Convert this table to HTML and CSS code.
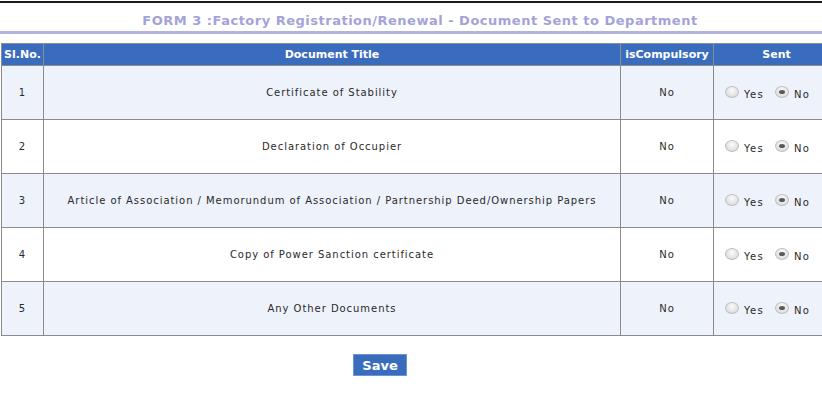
FILE: index.html
```html
<!DOCTYPE html>
<html>
<head>
<meta charset="utf-8">
<link rel="stylesheet" href="styles.css">
</head>
<body>
<div class="topline"></div>
<div class="page">
  <h1 class="title">FORM 3 :Factory Registration/Renewal - Document Sent to Department</h1>
  <table class="docs">
    <thead>
      <tr>
        <th class="c-sl">Sl.No.</th>
        <th class="c-title">Document Title</th>
        <th class="c-comp">isCompulsory</th>
        <th class="c-sent">Sent</th>
      </tr>
    </thead>
    <tbody>
      <tr class="odd">
        <td>1</td><td>Certificate of Stability</td><td>No</td>
        <td class="sent"><span class="radio"></span><span class="lbl">Yes</span><span class="radio on"></span><span class="lbl">No</span></td>
      </tr>
      <tr>
        <td>2</td><td>Declaration of Occupier</td><td>No</td>
        <td class="sent"><span class="radio"></span><span class="lbl">Yes</span><span class="radio on"></span><span class="lbl">No</span></td>
      </tr>
      <tr class="odd">
        <td>3</td><td>Article of Association / Memorundum of Association / Partnership Deed/Ownership Papers</td><td>No</td>
        <td class="sent"><span class="radio"></span><span class="lbl">Yes</span><span class="radio on"></span><span class="lbl">No</span></td>
      </tr>
      <tr>
        <td>4</td><td>Copy of Power Sanction certificate</td><td>No</td>
        <td class="sent"><span class="radio"></span><span class="lbl">Yes</span><span class="radio on"></span><span class="lbl">No</span></td>
      </tr>
      <tr class="odd">
        <td>5</td><td>Any Other Documents</td><td>No</td>
        <td class="sent"><span class="radio"></span><span class="lbl">Yes</span><span class="radio on"></span><span class="lbl">No</span></td>
      </tr>
    </tbody>
  </table>
  <div class="actions"><button class="save">Save</button></div>
</div>
</body>
</html>
```

FILE: styles.css
```css
html, body {
  margin: 0;
  padding: 0;
  background: #fff;
  overflow: hidden;
}
body {
  font-family: "DejaVu Sans", Verdana, sans-serif;
  color: #222;
}
.topline {
  margin-top: 1px;
  height: 2px;
  background: #1a1a1a;
}
.page {
  width: 840px;
}
.title {
  margin: 0;
  padding-top: 10px;
  height: 18px;
  text-align: center;
  font-size: 13px;
  letter-spacing: 0.5px;
  font-weight: bold;
  color: #a3a3da;
  border-bottom: 3px solid #b3b3e0;
}
.docs {
  margin: 9px 0 0 1px;
  width: 839px;
  border-collapse: collapse;
  font-size: 10px;
  letter-spacing: 0.95px;
}
.docs th, .docs td {
  border: 1px solid #8c8c8c;
  text-align: center;
  padding: 0;
}
.docs th {
  background: #3a6cbe;
  color: #fff;
  font-weight: bold;
  font-size: 11px;
  letter-spacing: 0;
  height: 21px;
}
.c-sl { width: 41px; }
.c-title { width: 576px; }
.c-comp { width: 92px; }
.docs td {
  height: 53px;
  color: #2a2a2a;
}
.docs tr.odd td {
  background: #edf2fb;
}
.docs td.sent {
  text-align: left;
  padding-left: 11px;
}
.radio {
  display: inline-block;
  width: 14px;
  height: 12px;
  border-radius: 50%;
  border: 1px solid #c0c0c0;
  background: radial-gradient(circle at 50% 35%, #fbfbfb 0%, #e2e2e2 65%, #cdcdcd 100%);
  vertical-align: -1px;
  box-sizing: border-box;
  position: relative;
}
.radio.on::after {
  content: "";
  position: absolute;
  left: 3px;
  top: 3px;
  width: 6px;
  height: 4px;
  border-radius: 50%;
  background: #5a5a5a;
}
.lbl {
  display: inline-block;
  margin: 0 11px 0 5px;
  letter-spacing: 1.3px;
  position: relative;
  top: 1px;
}
.actions {
  padding-top: 18px;
  padding-left: 353px;
}
.save {
  width: 54px;
  height: 22px;
  background: #3a6cbe;
  color: #fff;
  border: 1px solid #6d93d4;
  font-family: "DejaVu Sans", Verdana, sans-serif;
  font-weight: bold;
  font-size: 13px;
  padding: 0;
  cursor: pointer;
}
```
